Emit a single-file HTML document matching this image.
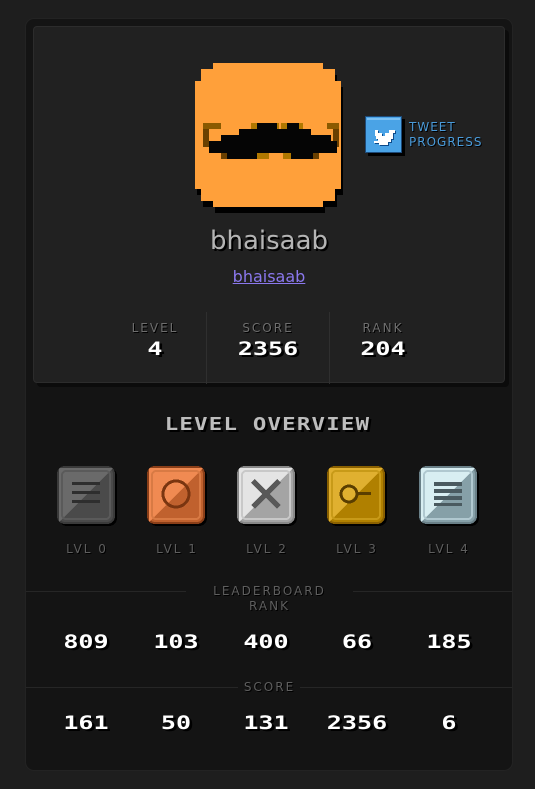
<!DOCTYPE html>
<html><head><meta charset="utf-8"><style>
*{margin:0;padding:0;box-sizing:border-box}
body{width:535px;height:789px;background:#1e1e1e;font-family:"Liberation Sans","DejaVu Sans",sans-serif;position:relative;overflow:hidden}
.outer{position:absolute;left:25px;top:18px;width:488px;height:753px;background:#141414;border:1px solid #232323;border-radius:9px}
.card{position:absolute;left:33px;top:26px;width:472px;height:357px;background:#212121;border:1px solid #2c2c2c;border-radius:4px;box-shadow:4px 4px 0 #0b0b0b}
.abs{position:absolute}
.lbl{color:#6e6e6e;font-size:12px;letter-spacing:2px;text-align:center;font-family:"DejaVu Sans",sans-serif;text-shadow:1px 1px 0 #000}
.px{color:#fff;font-family:"DejaVu Sans Mono",monospace;font-weight:bold;font-size:19px;text-align:center;text-shadow:2px 2px 0 #000;transform:scaleX(1.32);transform-origin:center}
.sep{position:absolute;top:285px;width:1px;height:72px;background:#2f2f2f}
.hl{position:absolute;height:1px;background:#262626}
</style></head><body>
<div class="outer"></div>
<div class="card">
 <div class="sep" style="left:172px"></div>
 <div class="sep" style="left:295px"></div>
</div>
<svg class="abs" style="left:195px;top:61px" width="152" height="156" viewBox="0 0 152 156" shape-rendering="crispEdges">
 <polygon fill="#000" points="20,8 130,8 130,14 142,14 142,26 148,26 148,134 142,134 142,146 130,146 130,152 20,152 20,146 8,146 8,134 2,134 2,26 8,26 8,14 20,14"/>
 <polygon fill="#ffa03a" points="14,2 124,2 124,8 136,8 136,20 142,20 142,128 136,128 136,140 124,140 124,146 14,146 14,140 2,140 2,128 -4,128 -4,20 2,20 2,8 14,8" transform="translate(4,0)"/>
 <rect x="8" y="62" width="18" height="6" fill="#8a5a00"/>
 <rect x="8" y="68" width="6" height="18" fill="#6a4000"/>
 <rect x="132" y="62" width="12" height="6" fill="#8a5a00"/>
 <rect x="138" y="68" width="6" height="18" fill="#6a4000"/>
 <rect x="56" y="62" width="28" height="6" fill="#b07800"/>
 <rect x="86" y="62" width="22" height="6" fill="#b07800"/>
 <polygon fill="#050505" points="14,80 26,80 26,74 44,74 44,68 62,68 62,62 82,62 82,68 92,68 92,62 104,62 104,68 116,68 116,74 136,74 136,80 142,80 142,92 124,92 124,98 90,98 90,92 74,92 74,98 28,98 28,92 14,92"/>
 <rect x="62" y="92" width="12" height="6" fill="#b07800"/>
 <rect x="88" y="92" width="8" height="6" fill="#b07800"/>
 <rect x="26" y="92" width="6" height="6" fill="#6a4000"/>
 <rect x="118" y="92" width="6" height="6" fill="#6a4000"/>
</svg>
<svg class="abs" style="left:364px;top:115px" width="42" height="42" viewBox="0 0 42 42" shape-rendering="crispEdges">
 <rect x="4" y="4" width="37" height="37" fill="#000"/>
 <rect x="1" y="1" width="37" height="37" fill="#1e4a78"/>
 <rect x="2" y="2" width="35" height="35" fill="#4aa3e6"/>
 <rect x="3" y="3" width="33" height="2" fill="#7cc0f2"/>
 <path fill="#0d4a8a" d="M11 15h3v3h4v3h3v-3h4v-3h6v3h-2v6h-2v3h-3v3h-9v-2h-5v-2h4v-2h-2v-3h-1z" transform="translate(1,1)"/>
 <path fill="#fff" d="M11 15h3v3h4v3h3v-3h4v-3h6v3h-2v6h-2v3h-3v3h-9v-2h-5v-2h4v-2h-2v-3h-1z"/>
</svg>
<div class="abs" style="left:409px;top:120px;color:#4a9ad8;font-size:12px;letter-spacing:1px;line-height:15px;font-family:'DejaVu Sans',sans-serif;text-shadow:1px 1px 0 #000">TWEET<br>PROGRESS</div>
<div class="abs" style="left:0;width:535px;top:226px;text-align:center;color:#b4b4b4;font-size:26px;font-family:'DejaVu Sans',sans-serif;text-shadow:2px 2px 0 #000;padding-left:3px">bhaisaab</div>
<div class="abs" style="left:0;width:535px;top:267px;text-align:center;color:#8b78ee;font-size:16px;text-decoration:underline;font-family:'DejaVu Sans',sans-serif;padding-left:3px">bhaisaab</div>

<div class="abs lbl" style="left:105px;width:100px;top:321px">LEVEL</div>
<div class="abs px" style="left:105px;width:100px;top:338px">4</div>
<div class="abs lbl" style="left:218px;width:100px;top:321px">SCORE</div>
<div class="abs px" style="left:218px;width:100px;top:338px">2356</div>
<div class="abs lbl" style="left:333px;width:100px;top:321px">RANK</div>
<div class="abs px" style="left:333px;width:100px;top:338px">204</div>

<div class="abs px" style="left:0;width:535px;top:414px;color:#bdbdbd;font-size:18px;letter-spacing:1px;transform:scaleX(1.24)">LEVEL OVERVIEW</div>

<svg class="abs" style="left:55px;top:464px" width="430" height="66" viewBox="0 0 430 66" shape-rendering="crispEdges">
 <defs>
  <clipPath id="c"><rect x="2" y="2" width="58" height="58" rx="8"/></clipPath>
 </defs>
 <g transform="translate(0,0)">
  <rect x="4" y="4" width="58" height="58" rx="8" fill="#000"/>
  <rect x="2" y="2" width="58" height="58" rx="8" fill="#3a3a3a"/>
  <g clip-path="url(#c)"><rect x="4" y="4" width="54" height="54" rx="6" fill="#4a4a4a"/><polygon points="4,4 58,4 4,58" fill="#6a6a6a"/></g>
  <rect x="7" y="7" width="48" height="48" rx="4" fill="none" stroke="#5a5a5a" stroke-width="2"/>
  <rect x="17" y="18" width="28" height="3" fill="#2e2e2e"/><rect x="17" y="27" width="28" height="3" fill="#2e2e2e"/><rect x="17" y="36" width="28" height="3" fill="#2e2e2e"/>
 </g>
 <g transform="translate(90,0)">
  <rect x="4" y="4" width="58" height="58" rx="8" fill="#000"/>
  <rect x="2" y="2" width="58" height="58" rx="8" fill="#8a3e18"/>
  <g clip-path="url(#c)"><rect x="4" y="4" width="54" height="54" rx="6" fill="#c0612e"/><polygon points="4,4 58,4 4,58" fill="#f08a52"/></g>
  <rect x="7" y="7" width="48" height="48" rx="4" fill="none" stroke="#d87a44" stroke-width="2"/>
  <circle cx="31" cy="30" r="13" fill="none" stroke="#7a3510" stroke-width="3"/>
 </g>
 <g transform="translate(180,0)">
  <rect x="4" y="4" width="58" height="58" rx="8" fill="#000"/>
  <rect x="2" y="2" width="58" height="58" rx="8" fill="#888"/>
  <g clip-path="url(#c)"><rect x="4" y="4" width="54" height="54" rx="6" fill="#a4a4a4"/><polygon points="4,4 58,4 4,58" fill="#e4e4e4"/></g>
  <rect x="7" y="7" width="48" height="48" rx="4" fill="none" stroke="#c8c8c8" stroke-width="2"/>
  <path d="M18 17L44 43M44 17L18 43" stroke="#585858" stroke-width="5"/>
 </g>
 <g transform="translate(270,0)">
  <rect x="4" y="4" width="58" height="58" rx="8" fill="#000"/>
  <rect x="2" y="2" width="58" height="58" rx="8" fill="#8a6000"/>
  <g clip-path="url(#c)"><rect x="4" y="4" width="54" height="54" rx="6" fill="#b08000"/><polygon points="4,4 58,4 4,58" fill="#e0b030"/></g>
  <rect x="7" y="7" width="48" height="48" rx="4" fill="none" stroke="#c89a18" stroke-width="2"/>
  <circle cx="24" cy="30" r="8" fill="none" stroke="#5a3e00" stroke-width="3"/><rect x="32" y="28" width="14" height="3" fill="#5a3e00"/>
 </g>
 <g transform="translate(362,0)">
  <rect x="4" y="4" width="58" height="58" rx="8" fill="#000"/>
  <rect x="2" y="2" width="58" height="58" rx="8" fill="#6a8088"/>
  <g clip-path="url(#c)"><rect x="4" y="4" width="54" height="54" rx="6" fill="#86a0a8"/><polygon points="4,4 58,4 4,58" fill="#d8eef2"/></g>
  <rect x="7" y="7" width="48" height="48" rx="4" fill="none" stroke="#b0c8d0" stroke-width="2"/>
  <rect x="17" y="18" width="28" height="4" fill="#4a5a60"/><rect x="17" y="25" width="28" height="4" fill="#4a5a60"/><rect x="17" y="32" width="28" height="4" fill="#4a5a60"/><rect x="17" y="39" width="28" height="3" fill="#4a5a60"/>
 </g>
</svg>
<div class="abs lbl" style="left:37px;width:100px;top:542px;color:#5e5e5e">LVL 0</div>
<div class="abs lbl" style="left:127px;width:100px;top:542px;color:#5e5e5e">LVL 1</div>
<div class="abs lbl" style="left:217px;width:100px;top:542px;color:#5e5e5e">LVL 2</div>
<div class="abs lbl" style="left:307px;width:100px;top:542px;color:#5e5e5e">LVL 3</div>
<div class="abs lbl" style="left:399px;width:100px;top:542px;color:#5e5e5e">LVL 4</div>

<div class="hl" style="left:26px;width:160px;top:591px"></div>
<div class="hl" style="left:353px;width:159px;top:591px"></div>
<div class="abs lbl" style="left:0;width:535px;top:584px;line-height:15px;color:#5e5e5e;padding-left:4px">LEADERBOARD<br>RANK</div>
<div class="abs px" style="left:36px;width:100px;top:631px">809</div>
<div class="abs px" style="left:126px;width:100px;top:631px">103</div>
<div class="abs px" style="left:216px;width:100px;top:631px">400</div>
<div class="abs px" style="left:307px;width:100px;top:631px">66</div>
<div class="abs px" style="left:399px;width:100px;top:631px">185</div>

<div class="hl" style="left:26px;width:212px;top:687px"></div>
<div class="hl" style="left:300px;width:212px;top:687px"></div>
<div class="abs lbl" style="left:0;width:535px;top:680px;color:#5e5e5e;padding-left:4px">SCORE</div>
<div class="abs px" style="left:36px;width:100px;top:712px">161</div>
<div class="abs px" style="left:126px;width:100px;top:712px">50</div>
<div class="abs px" style="left:216px;width:100px;top:712px">131</div>
<div class="abs px" style="left:307px;width:100px;top:712px">2356</div>
<div class="abs px" style="left:399px;width:100px;top:712px">6</div>
</body></html>
